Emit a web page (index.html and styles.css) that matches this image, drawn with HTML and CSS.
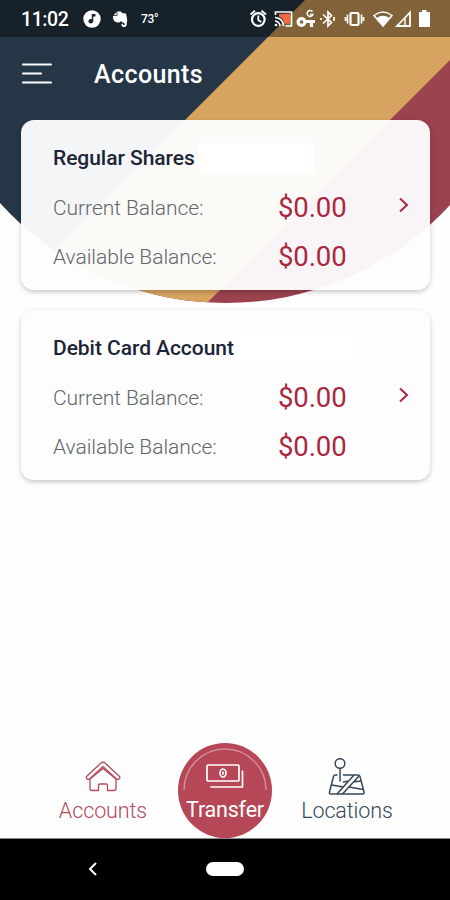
FILE: index.html
```html
<!DOCTYPE html>
<html lang="en">
<head>
    <meta charset="UTF-8">
    <meta name="viewport" content="width=device-width, initial-scale=1">
    <title>Accounts</title>
    <link rel="stylesheet" href="styles.css">
</head>
<body>
    <div class="app">
        <svg class="backdrop" viewBox="0 0 450 310" aria-hidden="true">
            <defs>
                <clipPath id="dome"><circle cx="226" cy="-2" r="305"/></clipPath>
            </defs>
            <g clip-path="url(#dome)">
                <rect width="450" height="310" fill="#9b424f"/>
                <path d="M0 0H510L200 310H0Z" fill="#d7a360"/>
                <path d="M0 0H305L0 305Z" fill="#253746"/>
            </g>
        </svg>

        <div class="status-bar">
            <span class="time">11:02</span>
            <svg class="status-left" viewBox="80 0 60 38" fill="#fff">
                <circle cx="92" cy="19" r="8.7"/>
                <path d="M91.800 21.500V14h3.700v2.500h-2.200v5" fill="#1a252e"/>
                <circle cx="90.800" cy="21.300" r="2.300" fill="#1a252e"/>
                <path d="M113 16l4-4.500h4l1 1.500 4 .5q2 6 .5 12-.6 2-3.500 1.500-2-.5-1.500-3l1.500-.5v1.500h1.500v-2q-3-.5-3.500-2-1 2-3.500 1.500-4-.5-4.500-5z"/>
                <path d="M113 15.500h4v-4" fill="none" stroke="#1a252e" stroke-width=".8"/>
            </svg>
            <span class="temperature">73°</span>
            <svg class="status-right" viewBox="245 0 190 38" fill="none" stroke="#fff" stroke-width="1.800">
                <!-- alarm -->
                <circle cx="258.300" cy="19.500" r="6.300" stroke-width="2.200"/>
                <path d="M258.300 15.500v4.500l3 2M250.500 14.500l4.500-3.700M266 14.500l-4.500-3.700"/>
                <!-- cast -->
                <path d="M279 14l11-.5v10h-6q0-5-5-7z" fill="#ef6b3f" stroke="none"/>
                <path d="M275.500 15v-3h16v14h-6M275 17.500q8 .5 8.500 8.500M275 21q4.500.5 5 5" stroke-width="1.700"/>
                <circle cx="276" cy="25" r="1.300" fill="#fff" stroke="none"/>
                <!-- key -->
                <circle cx="301.500" cy="22" r="3.400" stroke-width="3.200"/>
                <path d="M305 21.500h10M311.500 22v5" stroke-width="3.200"/>
                <path d="M312.500 11.500a3 3 0 1 0 .5 3h-3" stroke-width="1.500"/>
                <!-- bluetooth -->
                <path d="M323 14.500l8.500 8-3.500 3.500V12l3.500 3.500-8.500 8M334 17v4M321 18v2" stroke-width="1.700"/>
                <!-- vibrate -->
                <rect x="350.500" y="13" width="8" height="12" rx="1" stroke-width="2.200"/>
                <path d="M347.500 14.500v9M361.500 14.500v9M345.500 17v4M363.500 17v4" stroke-width="1.700"/>
                <!-- wifi, signal, battery -->
                <path d="M374 15.500q9-7 18 0L383 26z" stroke-width="1.500"/>
                <path d="M376.500 18q6.500-4.500 13 0L383 26z" fill="#fff" stroke="none"/>
                <path d="M397 26l13-13.500V26z" stroke-width="1.800"/>
                <path d="M405 26v-8" stroke-width="1.500"/>
                <path d="M419 12h3V10h4.500v2h3.500v15h-11z" fill="#fff" stroke="none"/>
            </svg>
        </div>

        <header class="app-header">
            <svg class="menu-icon" viewBox="0 0 32 24" fill="none" stroke="#fff" stroke-width="2" stroke-linecap="round">
                <path d="M2 2.500h28M2 11.500h18M2 20.500h28"/>
            </svg>
            <h1>Accounts</h1>
        </header>

        <main class="account-list">
            <section class="card">
                <div class="card-title">
                    <h2>Regular Shares</h2>
                    <span class="account-number"></span>
                </div>
                <div class="balance">
                    <span class="label">Current Balance:</span>
                    <span class="amount">$0.00</span>
                    <svg class="chevron" viewBox="0 0 12 16"><path d="M2 1.500l7 6.500-7 6.500"/></svg>
                </div>
                <div class="balance">
                    <span class="label">Available Balance:</span>
                    <span class="amount">$0.00</span>
                </div>
            </section>

            <section class="card">
                <div class="card-title">
                    <h2>Debit Card Account</h2>
                    <span class="account-number"></span>
                </div>
                <div class="balance">
                    <span class="label">Current Balance:</span>
                    <span class="amount">$0.00</span>
                    <svg class="chevron" viewBox="0 0 12 16"><path d="M2 1.500l7 6.500-7 6.500"/></svg>
                </div>
                <div class="balance">
                    <span class="label">Available Balance:</span>
                    <span class="amount">$0.00</span>
                </div>
            </section>
        </main>

        <nav class="tabs">
            <a class="tab tab-accounts">
                <svg viewBox="0 0 40 40" fill="none" stroke="#b34b5b" stroke-width="1.300" stroke-linejoin="round">
                    <path d="M3.500 18.500L18 5q2-1.500 4 0l14.500 13.500q1 1.500-.5 2.500-1 1-2.500 0L20 8.500 6.500 21Q5 22 4 21t-.5-2.500z"/>
                    <path d="M7 21L20 10.500 33 21v9.500q0 2-2 2h-6.500v-5q0-1.500-1.500-1.500h-6q-1.500 0-1.500 1.500v5H9q-2 0-2-2z"/>
                </svg>
                <span>Accounts</span>
            </a>
            <a class="tab tab-transfer">
                <svg class="arc" viewBox="0 0 94 94" fill="none" stroke="#d58c95" stroke-width="1.500">
                    <path d="M6 47a41 41 0 0 1 82 0"/>
                </svg>
                <svg viewBox="0 0 40 40" fill="none" stroke="#fff" stroke-width="1.700" stroke-linejoin="round" stroke-linecap="round">
                    <rect x="2" y="7" width="32" height="16" rx="1"/>
                    <ellipse cx="18" cy="15" rx="3" ry="4"/>
                    <path d="M18 14v2M37.500 13v16H6"/>
                </svg>
                <span>Transfer</span>
            </a>
            <a class="tab tab-locations">
                <svg viewBox="0 0 40 40" fill="none" stroke="#34485a" stroke-width="1.500" stroke-linejoin="round">
                    <circle cx="13" cy="5.500" r="4.800"/>
                    <path d="M13 10.500v13M10.500 17H8.500q-1.500 0-2 1.500L2.500 34q-.5 2 1.500 2h31.500q2 0 1.500-2L33 18.500q-.5-1.500-2-1.500H16"/>
                    <path d="M10 36l17-19M15.500 36L32 18M4.500 27l12 2M22 29l14 2.500M16 24l6-1M26 24l8-1"/>
                </svg>
                <span>Locations</span>
            </a>
        </nav>

        <div class="system-bar">
            <svg class="back" viewBox="0 0 10 14"><path d="M8 1L2 7l6 6"/></svg>
            <span class="home-pill"></span>
        </div>
    </div>
</body>
</html>
```

FILE: styles.css
```css
* {
    box-sizing: border-box;
}

body {
    margin: 0;
    background: #fefefe;
    font-family: Roboto, sans-serif;
}

.app {
    position: relative;
    display: flex;
    flex-direction: column;
    width: 450px;
    height: 900px;
    overflow: hidden;
}

/* Striped circle behind the header */
.backdrop {
    position: absolute;
    top: 0;
    left: 0;
    width: 450px;
    height: 310px;
    z-index: -1;
}

svg {
    display: block;
    flex: none;
}

/* Android status bar */
.status-bar {
    display: flex;
    align-items: center;
    height: 37px;
    padding-left: 21px;
    background: rgba(0, 0, 0, 0.4);
    color: #fff;
}

.time {
    width: 59px;
    font-size: 19.5px;
    font-weight: 500;
    letter-spacing: -0.4px;
    padding-top: 2px;
}

.status-left {
    width: 60px;
    height: 38px;
}

.temperature {
    width: 105px;
    padding-left: 1px;
    font-size: 12px;
    font-weight: 500;
    letter-spacing: -0.3px;
}

.status-right {
    width: 190px;
    height: 38px;
}

/* Header */
.app-header {
    display: flex;
    align-items: center;
    height: 83px;
    padding: 0 21px 9px;
}

.menu-icon {
    width: 32px;
    height: 24px;
    margin-right: 41px;
}

.app-header h1 {
    margin: 0;
    padding-top: 1px;
    color: #fff;
    font-size: 25px;
    font-weight: 500;
    letter-spacing: 0.4px;
}

/* Account cards */
.account-list {
    flex: 1;
    display: flex;
    flex-direction: column;
    gap: 20px;
    padding: 0 20px 0 21px;
}

.card {
    height: 170px;
    padding: 14px 19px 0 32px;
    border-radius: 13px;
    background: rgba(253, 253, 253, 0.96);
    box-shadow: 0 2px 5px rgba(0, 0, 0, 0.22);
}

.card-title {
    display: flex;
    align-items: center;
    gap: 4px;
    height: 48px;
}

.card h2 {
    margin: 0;
    color: #1b2537;
    font-size: 21px;
    font-weight: 500;
    letter-spacing: -0.05px;
}

.account-number {
    width: 116px;
    height: 30px;
    background: #fff;
}

.balance {
    display: flex;
    align-items: center;
    height: 49px;
}

.label {
    width: 225px;
    padding-top: 2px;
    color: #62676b;
    font-size: 21px;
    font-weight: 300;
    letter-spacing: -0.05px;
}

.amount {
    width: 120px;
    padding-top: 2px;
    color: #a92840;
    font-size: 27.5px;
    letter-spacing: -0.1px;
}

.chevron {
    width: 12px;
    height: 16px;
    margin-bottom: 3px;
    fill: none;
    stroke: #a92840;
    stroke-width: 2;
}

/* Bottom tabs */
.tabs {
    display: flex;
    align-items: flex-end;
    height: 95px;
    padding-left: 48px;
}

.tab {
    display: flex;
    flex-direction: column;
    align-items: center;
    font-size: 21.5px;
    line-height: 26px;
}

.tab svg {
    width: 40px;
    height: 40px;
}

.tab-accounts {
    width: 110px;
    height: 80px;
    color: #b34b5b;
    font-weight: 300;
    letter-spacing: -0.1px;
}

.tab-transfer {
    position: relative;
    width: 94px;
    height: 95px;
    margin: 0 20px;
    padding-top: 15px;
    border-radius: 50%;
    background: #b54756;
    color: #fff;
    letter-spacing: -0.2px;
    white-space: nowrap;
}

.tab-transfer span {
    margin-top: -1px;
}

.tab-transfer .arc {
    position: absolute;
    top: 0;
    left: 0;
    width: 94px;
    height: 94px;
}

.tab-locations {
    width: 110px;
    height: 80px;
    color: #34485a;
    font-weight: 300;
    letter-spacing: -0.1px;
}

/* Android navigation bar */
.system-bar {
    display: flex;
    align-items: center;
    height: 62px;
    padding: 0 0 2px 88px;
    border-top: 1px solid #888;
    background: #000;
}

.back {
    width: 10px;
    height: 14px;
    fill: none;
    stroke: #fff;
    stroke-width: 2;
}

.home-pill {
    width: 38px;
    height: 14px;
    margin-left: 108px;
    border-radius: 7px;
    background: #fff;
}
```
